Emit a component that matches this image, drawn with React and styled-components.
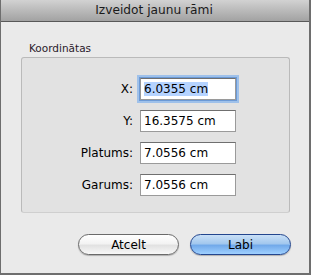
import React from "react";
import styled, { createGlobalStyle } from "styled-components";

const Global = createGlobalStyle`
  html, body {
    margin: 0;
    padding: 0;
    background: #ffffff;
  }
  * {
    box-sizing: border-box;
  }
`;

const Window = styled.div`
  width: 311px;
  height: 275px;
  border: 1px solid #6e6e6e;
  border-top: none;
  border-right-width: 2px;
  border-bottom-width: 2px;
  background: #eaeaea;
  font-family: "DejaVu Sans", "Liberation Sans", sans-serif;
  display: flex;
  flex-direction: column;
`;

const TitleBar = styled.div`
  height: 22px;
  flex-shrink: 0;
  background: linear-gradient(#d2d2d2, #bcbcbc 45%, #a2a2a2);
  border-bottom: 1px solid #585858;
  display: flex;
  align-items: center;
  justify-content: center;
  font-size: 12.2px;
  color: #1a1a1a;
  padding-bottom: 1px;
  padding-right: 2px;
`;

const Body = styled.div`
  padding: 20px 0 0 20px;
  display: flex;
  flex-direction: column;
`;

const GroupLabel = styled.div`
  font-size: 10.5px;
  line-height: 13px;
  color: #2a1a2a;
  margin-left: 8px;
  margin-bottom: 2px;
`;

const GroupBox = styled.div`
  width: 269px;
  height: 156px;
  background: #e2e2e2;
  border: 1px solid #bababa;
  border-bottom-color: #cfcfcf;
  border-radius: 3px;
  padding-top: 20px;
  display: flex;
  flex-direction: column;
  gap: 10px;
`;

const Row = styled.div`
  display: grid;
  grid-template-columns: 111px 96px;
  column-gap: 7px;
  align-items: center;
`;

const Label = styled.label`
  text-align: right;
  font-size: 12px;
  color: #000;
`;

const Field = styled.div`
  height: 22px;
  width: 96px;
  background: #fff;
  border: 1px solid #9a9a9a;
  border-top-color: #6f6f6f;
  box-shadow: ${(p) =>
    p.$focused ? "0 0 0 1px #6c9ad6, 0 0 0 3px #9fc1ea" : "none"};
  font-size: 12px;
  color: #000;
  padding: 0 0 0 3px;
  display: flex;
  align-items: center;
`;

const Selected = styled.span`
  background: #b5d3ff;
`;

const Buttons = styled.div`
  margin-top: 21px;
  width: 270px;
  display: flex;
  justify-content: flex-end;
  gap: 11px;
`;

const Button = styled.div`
  width: 101px;
  height: 21px;
  border-radius: 11px;
  border: 1px solid ${(p) => (p.$primary ? "#23468e" : "#6a6a6a")};
  background: ${(p) =>
    p.$primary
      ? "linear-gradient(#c9e0f7 0%, #a3c8ee 45%, #72aaea 55%, #9fd0ff 100%)"
      : "linear-gradient(#ffffff 0%, #f3f3f3 45%, #e2e2e2 55%, #f8f8f8 100%)"};
  box-shadow: 0 1px 1px rgba(0, 0, 0, 0.25);
  display: flex;
  align-items: center;
  justify-content: center;
  font-size: 12px;
  color: #000;
`;

const fields = [
  { label: "X:", value: "6.0355 cm", focused: true },
  { label: "Y:", value: "16.3575 cm" },
  { label: "Platums:", value: "7.0556 cm" },
  { label: "Garums:", value: "7.0556 cm" },
];

export default function App() {
  return (
    <>
      <Global />
      <Window>
        <TitleBar>Izveidot jaunu rāmi</TitleBar>
        <Body>
          <GroupLabel>Koordinātas</GroupLabel>
          <GroupBox>
            {fields.map((f) => (
              <Row key={f.label}>
                <Label>{f.label}</Label>
                <Field $focused={f.focused}>
                  {f.focused ? <Selected>{f.value}</Selected> : f.value}
                </Field>
              </Row>
            ))}
          </GroupBox>
          <Buttons>
            <Button>Atcelt</Button>
            <Button $primary>Labi</Button>
          </Buttons>
        </Body>
      </Window>
    </>
  );
}
